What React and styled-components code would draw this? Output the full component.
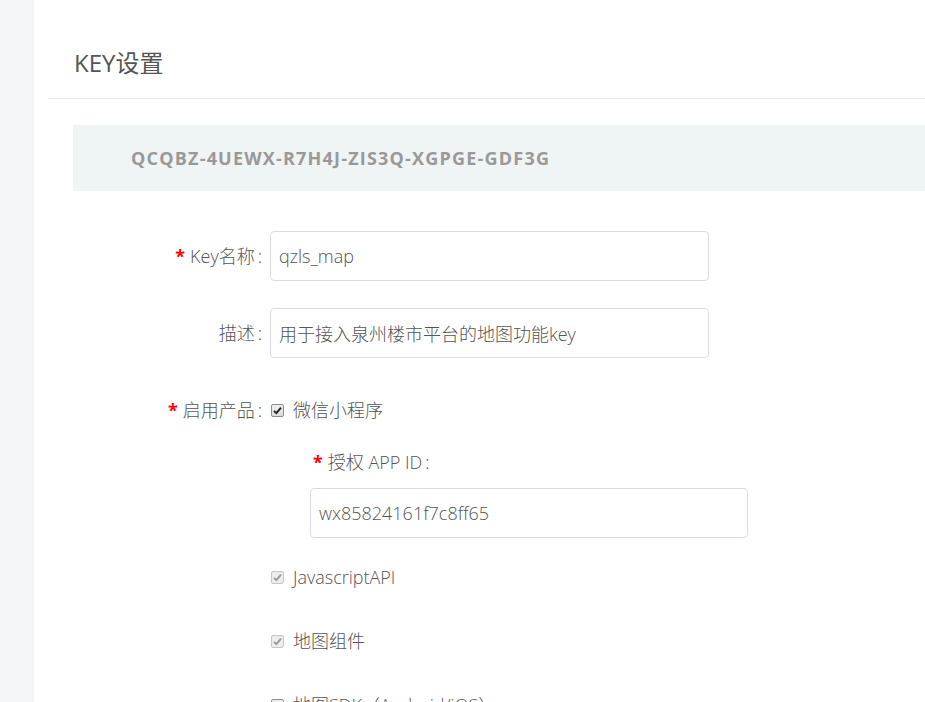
import React from "react";
import styled, { createGlobalStyle } from "styled-components";

const Global = createGlobalStyle`
  html, body { margin: 0; padding: 0; background: #fff; }
  body { overflow: hidden; font-family: "Open Sans", "Noto Sans CJK SC", sans-serif; }
  * { box-sizing: border-box; }
`;

const Page = styled.div`
  display: flex;
  min-height: 702px;
`;

const Sidebar = styled.div`
  width: 34px;
  flex: none;
  background: #f3f5f7;
`;

const Main = styled.div`
  flex: 1;
  padding-left: 14px;
`;

const Header = styled.div`
  height: 99px;
  padding: 46px 0 0 26px;
  border-bottom: 1px solid #ebebeb;
`;

const Title = styled.h1`
  margin: 0;
  font-size: 24px;
  line-height: 34px;
  font-weight: 400;
  color: #555;
  font-family: "Open Sans", "Noto Sans CJK SC", sans-serif;
`;

const KeyBanner = styled.div`
  margin: 26px 0 0 25px;
  height: 66px;
  background: #eff4f4;
  padding-left: 58px;
  display: flex;
  align-items: center;
  font-size: 18px;
  font-weight: 700;
  color: #999;
  letter-spacing: 1.2px;
`;

const Form = styled.div`
  padding-top: 40px;
  font-weight: 300;
`;

const Row = styled.div`
  display: grid;
  grid-template-columns: 214px 1fr;
  column-gap: 8px;
  align-items: center;
  margin-bottom: ${(p) => p.$mb || 0}px;
`;

const Label = styled.div`
  text-align: right;
  font-size: 18px;
  color: #555;
  line-height: 24px;
`;

const Colon = styled.span`
  margin-left: 3px;
`;

const Star = styled.span`
  color: #f00;
  font-weight: 700;
  margin-right: 5px;
`;

const TextInput = styled.div`
  width: ${(p) => p.$w || 439}px;
  height: 50px;
  border: 1px solid #dddce6;
  border-radius: 4px;
  padding-left: 8px;
  display: flex;
  align-items: center;
  font-size: 18px;
  color: #555;
`;

const Check = styled.label`
  display: flex;
  align-items: center;
  gap: 9px;
  padding-left: 1px;
  font-size: 18px;
  line-height: 24px;
  color: #555;
`;

const Box = styled.span`
  width: 13px;
  height: 13px;
  flex: none;
  border: 1px solid ${(p) => (p.$disabled ? "#c6c6c6" : "#8f8f8f")};
  border-radius: 2px;
  background: ${(p) => (p.$disabled ? "#ececec" : "linear-gradient(#f0f0f0, #dcdcdc)")};
  display: flex;
  align-items: center;
  justify-content: center;
`;

const Sub = styled.div`
  padding-left: 40px;
  margin-top: 28px;
`;

const SubLabel = styled.div`
  font-size: 18px;
  line-height: 24px;
  color: #555;
  padding-left: 3px;
  margin-bottom: 14px;
`;

const ProductList = styled.div`
  display: flex;
  flex-direction: column;
  gap: 40px;
  margin-top: 27px;
`;

function CheckBox({ checked, disabled, children }) {
  return (
    <Check $disabled={disabled}>
      <Box $disabled={disabled}>
        {checked && (
          <svg width="9" height="9" viewBox="0 0 9 9">
            <path
              d="M1 4.8 L3.4 7.2 L8 1.6"
              fill="none"
              stroke={disabled ? "#9a9a9a" : "#222"}
              strokeWidth="1.9"
            />
          </svg>
        )}
      </Box>
      {children}
    </Check>
  );
}

export default function App() {
  return (
    <>
      <Global />
      <Page>
        <Sidebar />
        <Main>
          <Header>
            <Title>KEY设置</Title>
          </Header>
          <KeyBanner>QCQBZ-4UEWX-R7H4J-ZIS3Q-XGPGE-GDF3G</KeyBanner>
          <Form>
            <Row $mb={27}>
              <Label>
                <Star>*</Star>Key名称<Colon>:</Colon>
              </Label>
              <TextInput>qzls_map</TextInput>
            </Row>
            <Row $mb={40}>
              <Label>
                描述<Colon>:</Colon>
              </Label>
              <TextInput>用于接入泉州楼市平台的地图功能key</TextInput>
            </Row>
            <Row>
              <Label>
                <Star>*</Star>启用产品<Colon>:</Colon>
              </Label>
              <CheckBox checked>微信小程序</CheckBox>
            </Row>
            <Row>
              <div />
              <div>
                <Sub>
                  <SubLabel>
                    <Star>*</Star>授权 APP ID<Colon>:</Colon>
                  </SubLabel>
                  <TextInput $w={438}>wx85824161f7c8ff65</TextInput>
                </Sub>
                <ProductList>
                  <CheckBox checked disabled>JavascriptAPI</CheckBox>
                  <CheckBox checked disabled>地图组件</CheckBox>
                  <CheckBox>地图SDK（Android/iOS）</CheckBox>
                </ProductList>
              </div>
            </Row>
          </Form>
        </Main>
      </Page>
    </>
  );
}
